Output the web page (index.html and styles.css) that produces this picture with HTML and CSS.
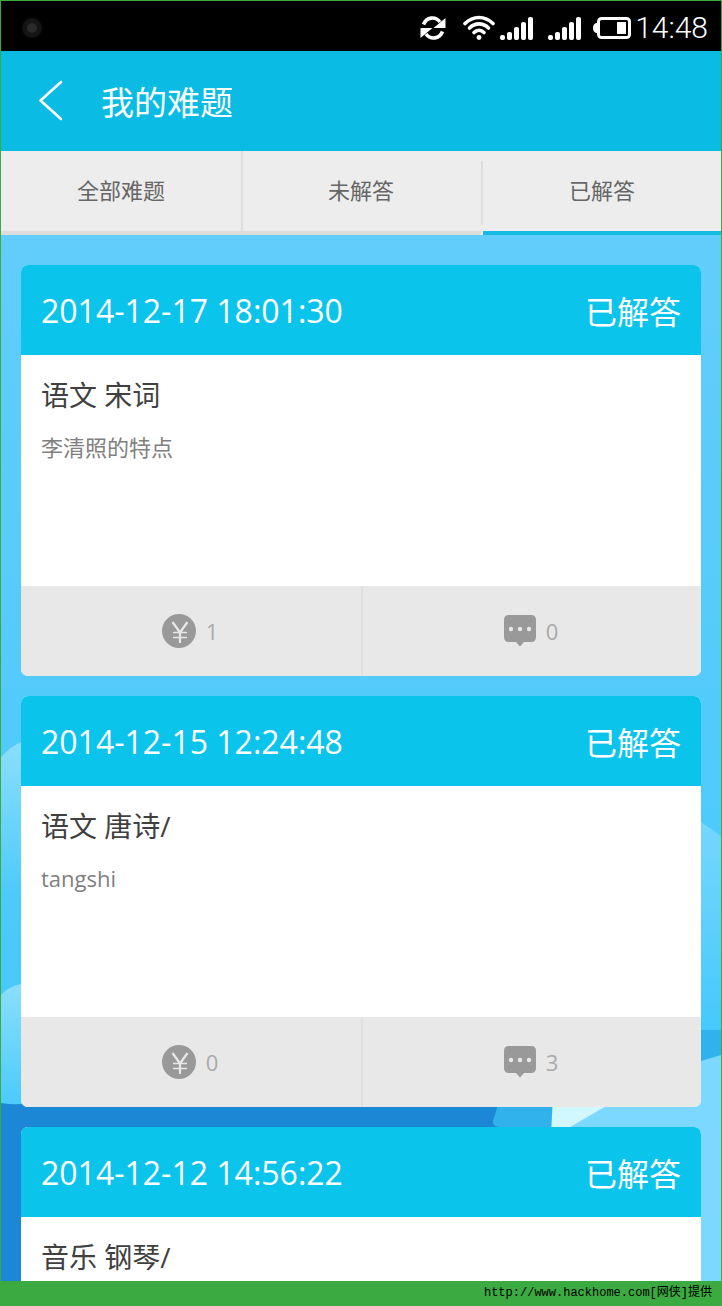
FILE: index.html
```html
<!DOCTYPE html>
<html lang="zh-CN">
<head>
<meta charset="utf-8">
<meta name="viewport" content="width=device-width, initial-scale=1">
<title>我的难题</title>
<link rel="stylesheet" href="styles.css">
</head>
<body>
<div class="screen">
  <div class="status-bar">
    <span class="camera"></span>
    <div class="status-icons">
      <svg class="icon-sync" width="26" height="24" viewBox="0 0 26 24" fill="none" stroke="#fff" stroke-width="3.600" aria-hidden="true">
        <path d="M3.500 8.500C6.500 .8 15.500 0 20 6"/>
        <path d="M25.500 2V12H13.500Z" fill="#fff" stroke="none"/>
        <path d="M22.500 15.500C19.500 23.200 10.500 24 6 18"/>
        <path d="M.5 22V12H12.500Z" fill="#fff" stroke="none"/>
      </svg>
      <svg class="icon-wifi" width="32" height="26" viewBox="0 0 32 26" fill="none" stroke="#fff" stroke-width="3.600" stroke-linecap="round" aria-hidden="true">
        <path d="M2 8.500C10 .4 22 .4 30 8.500"/>
        <path d="M6.500 13C12 7.500 20 7.500 25.500 13"/>
        <path d="M11 17.500C14 14.600 18 14.600 21 17.500"/>
        <circle cx="16" cy="22.500" r="2.400" fill="#fff" stroke="none"/>
      </svg>
      <svg class="icon-signal" width="34" height="24" viewBox="0 0 34 24" fill="#fff" aria-hidden="true">
        <rect x="0" y="19" width="5" height="5" rx="2"/><rect x="7" y="16" width="5" height="8" rx="2"/><rect x="14" y="11" width="5" height="13" rx="2"/><rect x="21" y="6" width="5" height="18" rx="2"/><rect x="28" y="1" width="5" height="23" rx="2"/>
      </svg>
      <svg class="icon-signal" width="34" height="24" viewBox="0 0 34 24" fill="#fff" aria-hidden="true">
        <rect x="0" y="19" width="5" height="5" rx="2"/><rect x="7" y="16" width="5" height="8" rx="2"/><rect x="14" y="11" width="5" height="13" rx="2"/><rect x="21" y="6" width="5" height="18" rx="2"/><rect x="28" y="1" width="5" height="23" rx="2"/>
      </svg>
      <svg class="icon-battery" width="38" height="22" viewBox="0 0 38 22" aria-hidden="true">
        <rect x="5.500" y="1.500" width="31" height="19" rx="3" fill="none" stroke="#fff" stroke-width="3"/>
        <path d="M5 6H3Q0 7 0 11T3 16H5Z" fill="#fff"/>
        <rect x="24" y="5" width="9" height="12" fill="#fff"/>
      </svg>
    </div>
    <time class="clock">14:48</time>
  </div>

  <header class="app-bar">
    <button class="back" type="button" aria-label="返回">
      <svg width="26" height="42" viewBox="0 0 26 42" fill="none" stroke="#fff" stroke-width="2.600" stroke-linecap="round" stroke-linejoin="round" aria-hidden="true"><path d="M23 2L2.500 20.500L23 39"/></svg>
    </button>
    <h1 class="app-title">我的难题</h1>
  </header>

  <nav class="tabs">
    <button class="tab" type="button">全部难题</button>
    <button class="tab tab-divided" type="button">未解答</button>
    <button class="tab tab-active" type="button" aria-current="page">已解答</button>
  </nav>

  <main class="content">
    <svg class="scenery" viewBox="0 0 720 1046" preserveAspectRatio="none" aria-hidden="true">
      <defs>
        <linearGradient id="sky" x1="0" y1="0" x2="0" y2="1"><stop offset="0" stop-color="#62cdfb"/><stop offset=".45" stop-color="#53cbfa"/><stop offset=".8" stop-color="#45c9fc"/></linearGradient>
        <linearGradient id="cloud" x1="0" y1="0" x2="0" y2="1"><stop offset="0" stop-color="#8ddffc"/><stop offset="1" stop-color="#8ddffc" stop-opacity="0"/></linearGradient>
        <linearGradient id="cloud-right" x1="0" y1="0" x2="0" y2="1"><stop offset="0" stop-color="#78d8fc"/><stop offset="1" stop-color="#78d8fc" stop-opacity="0"/></linearGradient>
      </defs>
      <path fill="url(#sky)" d="M0 0H720V1046H0Z"/>
      <path fill="url(#cloud)" d="M0 522Q9 512 20 507L60 500V660H0Z"/>
      <path fill="url(#cloud)" d="M0 760Q8 751 20 749L60 744V880H0Z"/>
      <path fill="url(#cloud-right)" d="M660 570Q690 582 700 587L720 601V780H660Z"/>
      <path fill="#1c88d5" d="M0 868Q12 870 20 869H560V1046H0Z"/>
      <path fill="#31b2ec" d="M500 860L492 886Q491 892 500 892H560V850H720V795H600Z"/>
      <path fill="#d1f7ff" d="M552 860L550 900H720V830H640Z"/>
      <path fill="#7dd8ff" d="M720 820L700 826L650 845L564 895V1046H720Z"/>
    </svg>
    <section class="cards">
      <article class="card">
        <header class="card-head"><time>2014-12-17 18:01:30</time><span>已解答</span></header>
        <div class="card-body"><h2 class="card-title">语文 宋词</h2><p class="card-text">李清照的特点</p></div>
        <footer class="card-foot">
          <button class="stat" type="button" aria-label="悬赏 1"><svg width="34" height="34" viewBox="0 0 34 34" aria-hidden="true"><circle cx="17" cy="17" r="17" fill="#999"/><path d="M10.500 8L18 18.500L25.500 8M18 18.500V29" fill="none" stroke="#e8e8e8" stroke-width="2.200"/><path d="M11 18.500H25M11 23.500H25" fill="none" stroke="#e8e8e8" stroke-width="1.600"/></svg><span>1</span></button>
          <button class="stat" type="button" aria-label="回复 0"><svg width="32" height="32" viewBox="0 0 32 32" aria-hidden="true"><path d="M5 0H27Q32 0 32 5V22Q32 27 27 27H20L16 31.500L12 27H5Q0 27 0 22V5Q0 0 5 0Z" fill="#999"/><g fill="#e8e8e8"><circle cx="7" cy="14" r="2.200"/><circle cx="16" cy="14" r="2.200"/><circle cx="25" cy="14" r="2.200"/></g></svg><span>0</span></button>
        </footer>
      </article>
      <article class="card">
        <header class="card-head"><time>2014-12-15 12:24:48</time><span>已解答</span></header>
        <div class="card-body"><h2 class="card-title">语文 唐诗/</h2><p class="card-text">tangshi</p></div>
        <footer class="card-foot">
          <button class="stat" type="button" aria-label="悬赏 0"><svg width="34" height="34" viewBox="0 0 34 34" aria-hidden="true"><circle cx="17" cy="17" r="17" fill="#999"/><path d="M10.500 8L18 18.500L25.500 8M18 18.500V29" fill="none" stroke="#e8e8e8" stroke-width="2.200"/><path d="M11 18.500H25M11 23.500H25" fill="none" stroke="#e8e8e8" stroke-width="1.600"/></svg><span>0</span></button>
          <button class="stat" type="button" aria-label="回复 3"><svg width="32" height="32" viewBox="0 0 32 32" aria-hidden="true"><path d="M5 0H27Q32 0 32 5V22Q32 27 27 27H20L16 31.500L12 27H5Q0 27 0 22V5Q0 0 5 0Z" fill="#999"/><g fill="#e8e8e8"><circle cx="7" cy="14" r="2.200"/><circle cx="16" cy="14" r="2.200"/><circle cx="25" cy="14" r="2.200"/></g></svg><span>3</span></button>
        </footer>
      </article>
      <article class="card">
        <header class="card-head"><time>2014-12-12 14:56:22</time><span>已解答</span></header>
        <div class="card-body"><h2 class="card-title">音乐 钢琴/</h2></div>
      </article>
    </section>
  </main>
</div>
<footer class="credit">http://www.hackhome.com[网侠]提供</footer>
</body>
</html>
```
FILE: styles.css
```css
* {
  box-sizing: border-box;
}

body {
  margin: 0;
  height: 100vh;
  display: flex;
  flex-direction: column;
  overflow: hidden;
  background: #3aaa41;
  font-family: "Open Sans", "Noto Sans CJK SC", sans-serif;
}

button {
  margin: 0;
  padding: 0;
  border: 0;
  background: none;
  font: inherit;
  color: inherit;
}

svg {
  display: block;
  flex: none;
}

.screen {
  flex: 1;
  min-height: 0;
  display: flex;
  flex-direction: column;
  padding: 1px 1px 0;
}

/* Status bar */
.status-bar {
  flex: none;
  display: flex;
  align-items: center;
  height: 50px;
  padding: 4px 13px 0 21px;
  background: #000;
  color: #fff;
}

.camera {
  width: 20px;
  height: 20px;
  border: 5px solid #141414;
  border-radius: 50%;
  background: #2a2a2a;
}

.status-icons {
  display: flex;
  align-items: center;
  margin-left: auto;
}

.icon-wifi {
  margin-left: 17px;
}

.icon-signal {
  margin-left: 5px;
}

.icon-signal + .icon-signal {
  margin-left: 14px;
}

.icon-battery {
  margin-left: 11px;
}

.clock {
  margin-left: 4px;
  font-family: Roboto, sans-serif;
  font-size: 30px;
  font-weight: 300;
  line-height: 40px;
}

/* Title bar */
.app-bar {
  flex: none;
  display: flex;
  align-items: center;
  gap: 37px;
  height: 100px;
  padding: 0 37px;
  background: #0abce4;
  color: #fff;
}

.app-title {
  margin: 0;
  padding-top: 4px;
  font-size: 33px;
  font-weight: 400;
  line-height: 48px;
}

/* Tabs */
.tabs {
  flex: none;
  display: grid;
  grid-template-columns: repeat(3, 1fr);
  height: 84px;
  background: #ededed;
  color: #666;
}

.tab {
  position: relative;
  padding-bottom: 4px;
  border-bottom: 4px solid #ddd;
  font-size: 22px;
}

.tab-divided::before,
.tab-active::before {
  content: "";
  position: absolute;
  left: 0;
  top: 0;
  bottom: 0;
  width: 2px;
  background: #ddd;
}

.tab-active::before {
  left: -2px;
  top: 10px;
  bottom: 6px;
}

.tab-active {
  margin-left: 2px;
  border-bottom-color: #16bbe3;
}

/* Question list */
.content {
  position: relative;
  flex: 1;
  min-height: 0;
  overflow: hidden;
}

.scenery {
  position: absolute;
  inset: 0;
  width: 100%;
  height: 100%;
}

.cards {
  position: relative;
  display: grid;
  gap: 20px;
  padding: 30px 20px;
}

.card {
  overflow: hidden;
  border-radius: 7px;
  background: #fff;
}

.card-head {
  display: flex;
  align-items: center;
  justify-content: space-between;
  height: 90px;
  padding: 0 20px;
  background: #0bc4ec;
  color: #fff;
  font-size: 32px;
}

.card-body {
  min-height: 231px;
  padding: 20px;
}

.card-title {
  margin: 0;
  color: #404040;
  font-size: 28px;
  font-weight: 400;
  line-height: 40px;
}

.card-text {
  margin: 16px 0 0;
  color: #808080;
  font-size: 22px;
  line-height: 32px;
}

.card-foot {
  display: grid;
  grid-template-columns: 1fr 1fr;
  height: 90px;
  background: #e8e8e8;
  color: #aaa;
}

.stat {
  display: flex;
  align-items: center;
  justify-content: center;
  gap: 10px;
  padding-right: 2px;
  font-size: 22px;
}

.stat + .stat {
  border-left: 2px solid #e0e0e0;
}

.credit {
  flex: none;
  height: 25px;
  padding-right: 10px;
  color: #000;
  font-family: "Liberation Mono", "Noto Sans CJK SC", monospace;
  font-size: 12px;
  line-height: 24px;
  text-align: right;
}
```
